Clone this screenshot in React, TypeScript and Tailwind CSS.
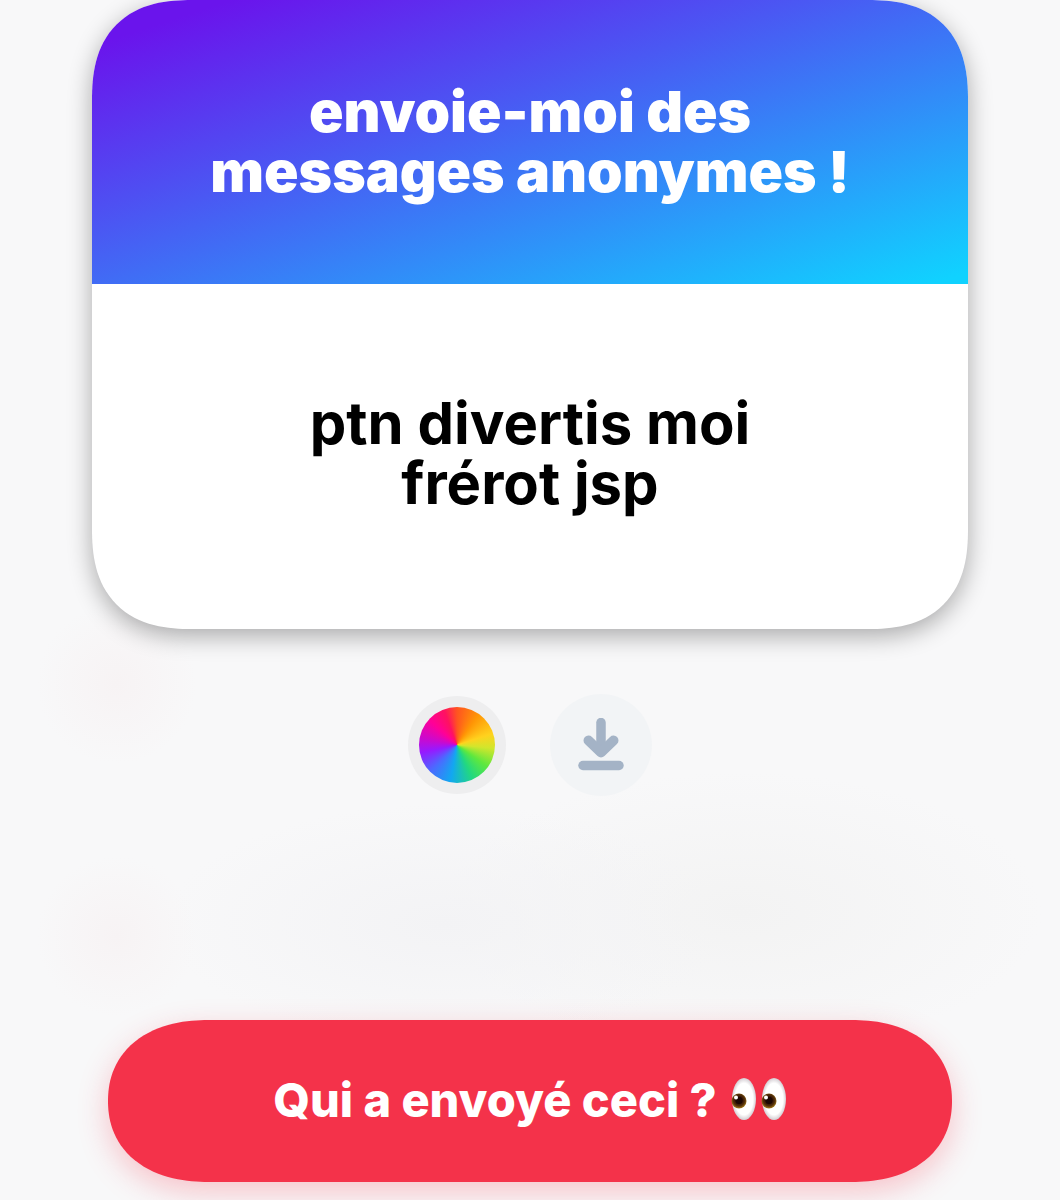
import React from "react";

function Eyes() {
  return (
    <svg viewBox="0 0 56 44" className="w-14 h-11 shrink-0" role="img" aria-label="yeux">
      <defs>
        <radialGradient id="white" cx="50%" cy="50%" r="50%">
          <stop offset="0.75" stopColor="#ffffff" />
          <stop offset="1" stopColor="#d3cdd2" />
        </radialGradient>
        <radialGradient id="iris" cx="50%" cy="45%" r="55%">
          <stop offset="0.35" stopColor="#2a0d04" />
          <stop offset="0.7" stopColor="#54300a" />
          <stop offset="1" stopColor="#a87d1c" />
        </radialGradient>
      </defs>
      {[0, 30].map((x) => (
        <g key={x} transform={`translate(${x} 0)`}>
          <ellipse cx="13" cy="21" rx="12" ry="21" fill="url(#white)" />
          <circle cx="8" cy="23" r="7.500" fill="url(#iris)" />
          <circle cx="8" cy="22.500" r="3.500" fill="#1c0703" />
          <circle cx="5" cy="19.500" r="2" fill="#ffffff" />
        </g>
      ))}
    </svg>
  );
}

function DownloadIcon() {
  return (
    <svg
      viewBox="0 0 46 54"
      className="w-[46px] h-[54px]"
      fill="none"
      stroke="#a4b3c6"
      strokeLinecap="round"
      strokeLinejoin="round"
      aria-hidden="true"
    >
      <path d="M23 4.500v28" strokeWidth="9.500" />
      <path d="M10.500 22.500 23 34.500 35.500 22.500" strokeWidth="10" />
      <path d="M5 47.500h36" strokeWidth="9.500" />
    </svg>
  );
}

export default function App() {
  return (
    <main className="min-h-screen overflow-hidden bg-[#f8f8f9] bg-[radial-gradient(ellipse_80px_80px_at_11%_57%,#f7f3f4,transparent),radial-gradient(ellipse_80px_80px_at_11%_78%,#f7f3f4,transparent),radial-gradient(ellipse_280px_120px_at_42%_77%,#f3f3f5,transparent),radial-gradient(ellipse_300px_140px_at_70%_76%,#f3f3f3,transparent)] px-[92px] pb-[18px] font-['Inter','Liberation_Sans',sans-serif]">
      <article className="overflow-hidden rounded-[100px] [corner-shape:superellipse(1.3)] bg-white text-center leading-[60px] shadow-[0_7px_24px_rgba(0,0,0,0.32)]">
        <header className="flex h-[284px] items-center justify-center bg-[linear-gradient(162deg,#6a14ec_8%,#4a58f3_41%,#10d2ff_98%)] px-24">
          <h1 className="max-w-[680px] text-[57px] font-black text-white">
            envoie-moi des messages anonymes !
          </h1>
        </header>
        <div className="flex h-[345px] items-center justify-center px-24 pb-2">
          <p className="max-w-[500px] text-[58px] font-bold text-black">ptn divertis moi frérot jsp</p>
        </div>
      </article>

      <div className="mt-[65px] flex items-center justify-center gap-11">
        <button
          type="button"
          aria-label="Changer la couleur"
          className="flex size-[98px] items-center justify-center rounded-full bg-[#eeeeef]"
        >
          <span className="size-[76px] rounded-full bg-[conic-gradient(#ff5420,#ff9505_35deg,#ffd21e_72deg,#d2e62c_95deg,#5ee83e_125deg,#22d880_155deg,#12a8f0_190deg,#4a6bff_225deg,#961aff_258deg,#c80ad0_280deg,#ff0098_312deg,#ff1260_340deg,#ff5420)]" />
        </button>
        <button
          type="button"
          aria-label="Télécharger"
          className="flex size-[102px] items-center justify-center rounded-full bg-[#f2f4f6]"
        >
          <DownloadIcon />
        </button>
      </div>

      <div className="mt-56 px-4">
        <button
          type="button"
          className="flex h-[162px] w-full items-center justify-center gap-3.5 rounded-[100px/81px] [corner-shape:superellipse(1.15)] bg-[#f4324a] pb-0.5 text-[47px] font-extrabold text-white shadow-[0_10px_30px_rgba(244,50,74,0.27)]"
        >
          <span>Qui a envoyé ceci ?</span>
          <Eyes />
        </button>
      </div>
    </main>
  );
}
